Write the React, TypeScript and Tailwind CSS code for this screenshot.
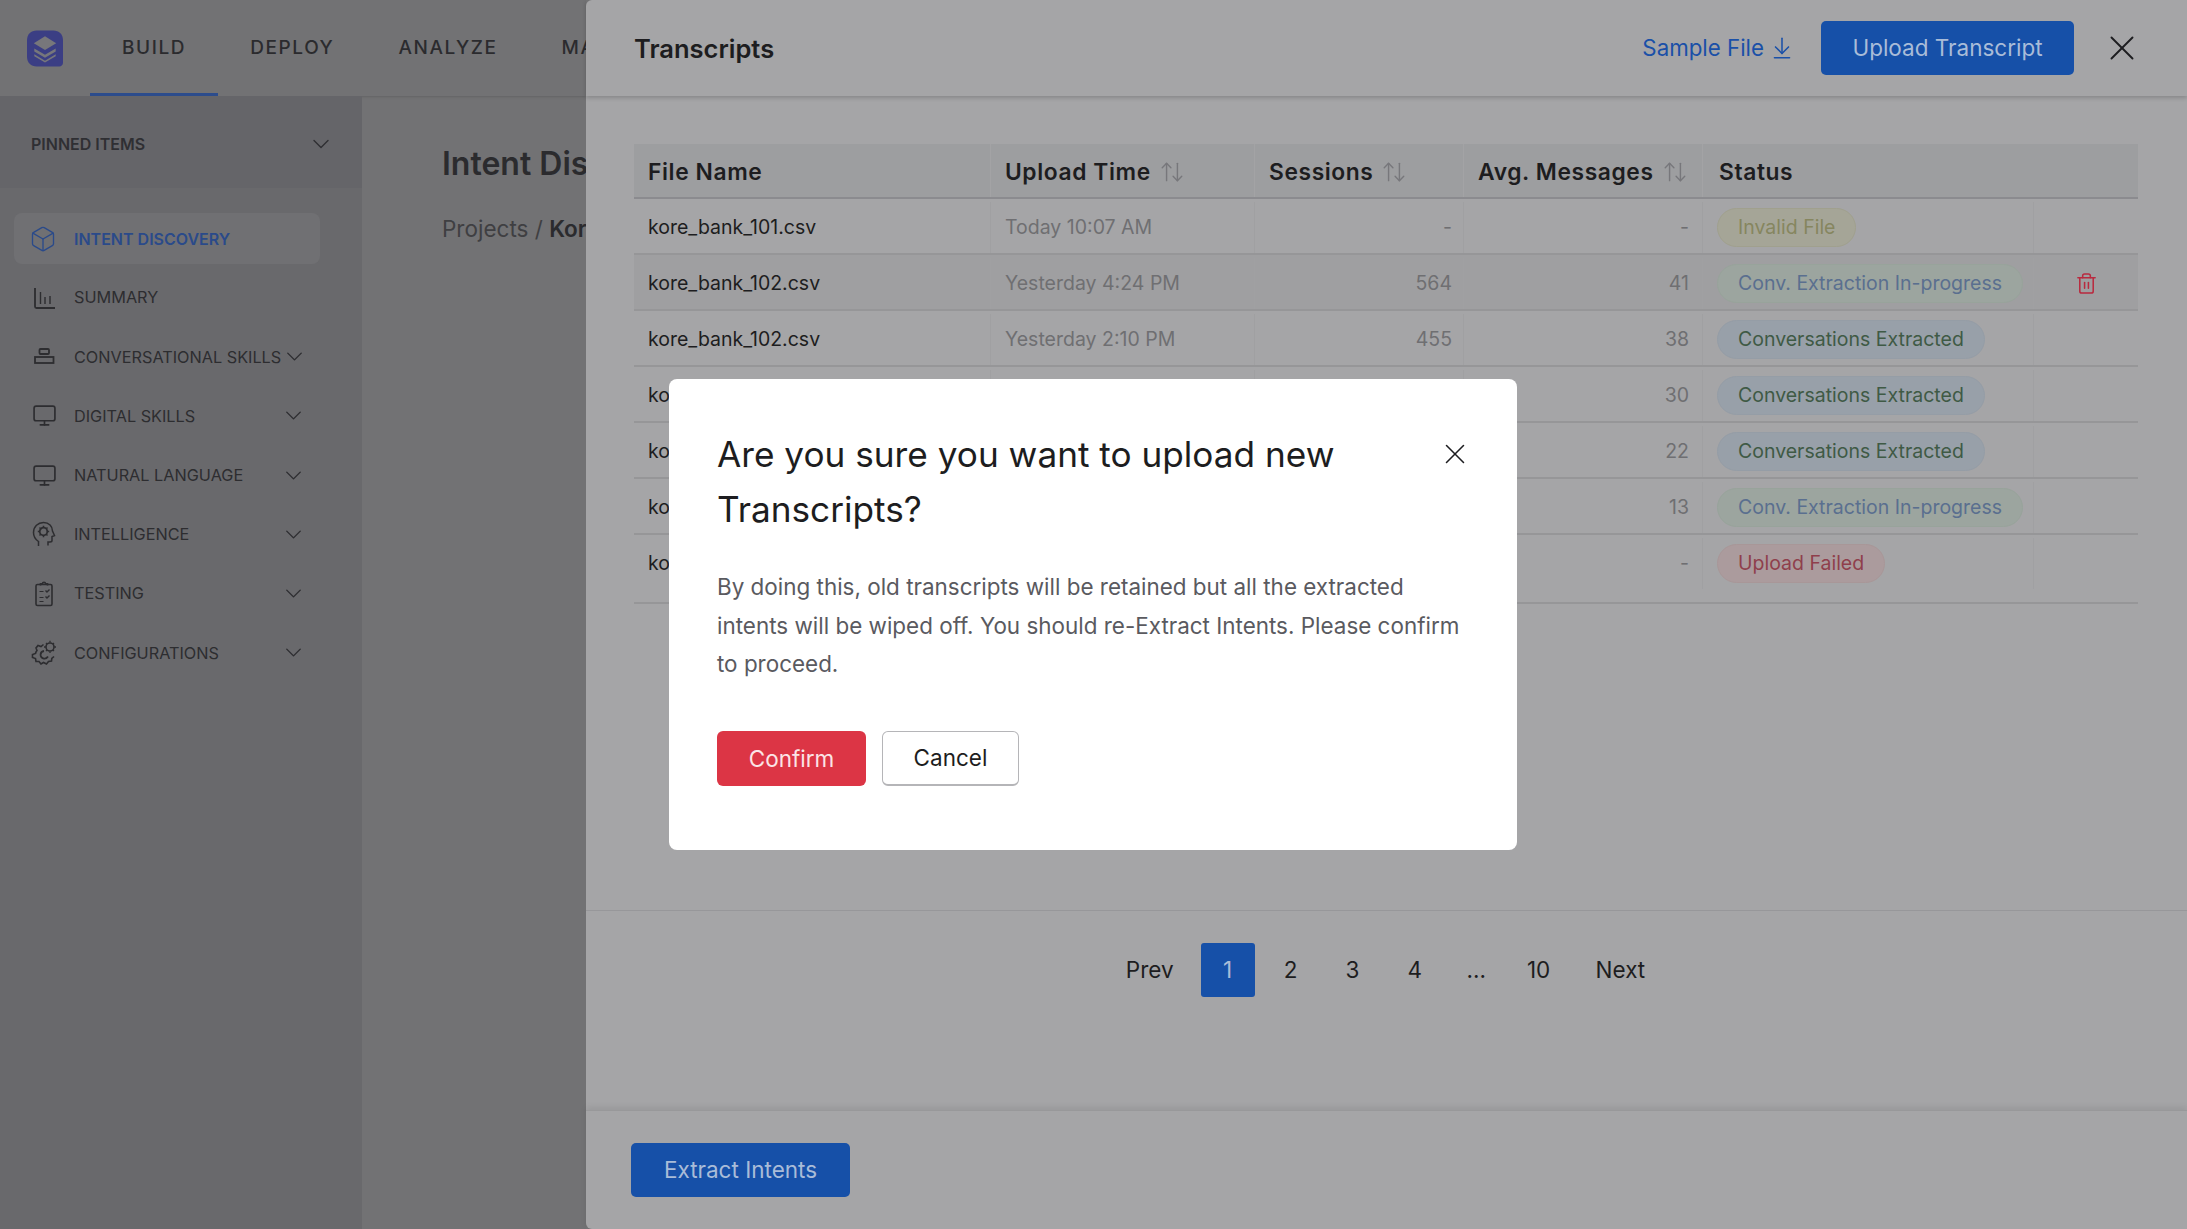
import React from 'react';
import { ArrowDownToLine, ArrowUpDown, Box, ChevronDown, Monitor, Trash2, X } from 'lucide-react';

const LogoMark = () => (
  <svg width="36" height="37" viewBox="0 0 37 37" className="shrink-0">
    <path d="M10 0H27C33 0 37 4 37 10V33C37 35.5 35.5 37 33 37H10C4 37 0 33 0 27V10C0 4 4 0 10 0Z" fill="#3b3e84" />
    <path d="M18.5 6L30 13L18.5 20L7 13Z" fill="#77777b" />
    <path d="M7.5 18.5L18.5 25L29.5 18.5V21.5L18.5 28L7.5 21.5Z" fill="#77777b" />
    <path d="M7.5 24.5L18.5 31L29.5 24.5V26.5L18.5 33L7.5 26.5Z" fill="#77777b" />
  </svg>
);

const SummaryIcon = () => (
  <svg width="24" height="24" viewBox="0 0 24 24" fill="none" stroke="currentColor" strokeWidth="1.4">
    <path d="M3 2V20.5C3 21.5 3.5 22 4.5 22H23" strokeWidth="1.8" />
    <path d="M8.5 6V18M13 11V18M18 10V18" />
  </svg>
);

const StackIcon = () => (
  <svg width="24" height="24" viewBox="0 0 24 24" fill="none" stroke="currentColor" strokeWidth="1.8">
    <rect x="7.5" y="4" width="9.5" height="5" rx="1" />
    <rect x="3" y="12" width="18.5" height="6" />
  </svg>
);

const HeadGearIcon = () => (
  <svg width="24" height="26" viewBox="0 0 24 26" fill="none" stroke="currentColor" strokeWidth="1.5">
    <path d="M6.5 25V20.5C3.5 18.5 1.5 15.5 1.5 11.5C1.5 5.5 6 1.5 11.5 1.5C17 1.5 20.5 5.5 20.5 10L22.5 14.5L20 15.5V19.5C20 20.5 19 21 18 21H16V24.5" />
    <circle cx="11.5" cy="10.5" r="3.8" strokeWidth="1.8" />
    <path d="M11.5 4.8V6.5M11.5 14.5V16.2M5.8 10.5H7.5M15.5 10.5H17.2M7.5 6.5L8.7 7.7M14.3 13.3L15.5 14.5M7.5 14.5L8.7 13.3M14.3 7.7L15.5 6.5" />
  </svg>
);

const ChecklistIcon = () => (
  <svg width="24" height="26" viewBox="0 0 24 26" fill="none" stroke="currentColor" strokeWidth="1.6">
    <rect x="4" y="3.5" width="16" height="21" rx="1.5" />
    <path d="M8.5 4.5V2.8H10.5C10.5 0.8 13.5 0.8 13.5 2.8H15.5V4.5" />
    <path d="M7.5 10.5H11.5M7.5 16.5H11.5M7.5 20.5H11.5" strokeWidth="1.2" />
    <path d="M13.5 9.5L15 11L17.5 8.5M13.5 15.5L15 17L17.5 14.5" strokeWidth="1.4" />
  </svg>
);

const GearsIcon = () => (
  <svg width="26" height="26" viewBox="0 0 26 26" fill="none" stroke="currentColor" strokeWidth="1.6">
    <path d="M12.5 4.5L10 6.5L7 5.5L5 8L6 10.5C5.2 11.4 4.7 12.5 4.5 13.5L1.5 14.5V17.5L4.5 18.5L5 21.5L8 21.5L10 24L12.5 22.5L15.5 24L17.5 21.5L20.5 21L20.8 18.5L23 16.5" />
    <circle cx="19" cy="7" r="4" />
    <path d="M19 0.8V2.5M19 11.5V13M13 7H14.8M23.2 7H25M15 3L16 4M22 10L23 11M15 11L16 10M22 4L23 3" strokeWidth="1.3" />
    <path d="M17 16.5C16 18 14.6 18.8 13 18.6C10.8 18.3 9.3 16.4 9.6 14.3C9.8 12.6 11.2 11.2 13 11" strokeWidth="1.8" />
  </svg>
);

const sideItems = [
  { label: 'SUMMARY', icon: <SummaryIcon /> },
  { label: 'CONVERSATIONAL SKILLS', icon: <StackIcon />, more: true },
  { label: 'DIGITAL SKILLS', icon: <Monitor size={25} strokeWidth={1.6} />, more: true },
  { label: 'NATURAL LANGUAGE', icon: <Monitor size={25} strokeWidth={1.6} />, more: true },
  { label: 'INTELLIGENCE', icon: <HeadGearIcon />, more: true },
  { label: 'TESTING', icon: <ChecklistIcon />, more: true },
  { label: 'CONFIGURATIONS', icon: <GearsIcon />, more: true },
];

const pillStyles: Record<string, string> = {
  invalid: 'bg-[#a5a597] border-[#a0a08e] text-[#86865f]',
  progress: 'bg-[#9ca59f] border-[#98a39b] text-[#5a6f8f]',
  done: 'bg-[#98a0a9] border-[#959da6] text-[#3f5a45]',
  failed: 'bg-[#ab9b9d] border-[#a89798] text-[#8f3f4c]',
};

// rows 4-7 sit behind the modal, only the start of the name shows
const rows = [
  { name: 'kore_bank_101.csv', time: 'Today 10:07 AM', sessions: '-', avg: '-', status: 'Invalid File', kind: 'invalid' },
  { name: 'kore_bank_102.csv', time: 'Yesterday 4:24 PM', sessions: '564', avg: '41', status: 'Conv. Extraction In-progress', kind: 'progress', trash: true },
  { name: 'kore_bank_102.csv', time: 'Yesterday 2:10 PM', sessions: '455', avg: '38', status: 'Conversations Extracted', kind: 'done' },
  { name: 'ko', time: '', sessions: '', avg: '30', status: 'Conversations Extracted', kind: 'done' },
  { name: 'ko', time: '', sessions: '', avg: '22', status: 'Conversations Extracted', kind: 'done' },
  { name: 'ko', time: '', sessions: '', avg: '13', status: 'Conv. Extraction In-progress', kind: 'progress' },
  { name: 'ko', time: '', sessions: '', avg: '-', status: 'Upload Failed', kind: 'failed' },
];

const HeadCell = ({ label, sort, className }: { label: string; sort?: boolean; className: string }) => (
  <div className={`flex items-center gap-2 border-r border-[#a3a3a5] pl-[14px] pt-[3px] text-[22.8px] font-semibold tracking-[0.6px] text-[#1d1d20] ${className}`}>
    {label}
    {sort && <ArrowUpDown size={26} strokeWidth={1.3} className="text-[#77777b]" />}
  </div>
);

export default function App() {
  return (
    <div className="relative h-[1229px] w-[2187px] overflow-hidden bg-[#727274] font-['Inter',sans-serif]">
      {/* Page behind the panel, clipped at the panel's edge */}
      <div className="flex h-full w-[586px] flex-col overflow-hidden">
        <header className="flex h-24 shrink-0 items-center pl-[27px] shadow-sm">
          <LogoMark />
          <nav className="ml-[27px] flex h-full">
            {['BUILD', 'DEPLOY', 'ANALYZE', 'MANAGE'].map((item, idx) => (
              <div key={item} className={`flex items-center border-b-[3px] px-[32px] pt-[3px] text-[19px] font-medium tracking-[1.6px] text-[#2b2b2e] ${idx === 0 ? 'border-[#2c4c8c]' : 'border-transparent'}`}>
                {item}
              </div>
            ))}
          </nav>
        </header>

        <div className="flex min-h-0 flex-1">
          <aside className="w-[362px] shrink-0 bg-[#69696c]">
            <div className="flex h-[92px] items-center justify-between bg-[#656569] pl-[31px] pr-[27px] pt-[3px]">
              <span className="text-[16px] font-semibold text-[#2f2f33]">PINNED ITEMS</span>
              <ChevronDown size={28} strokeWidth={1.2} className="text-[#2f2f33]" />
            </div>
            <div className="flex flex-col px-[14px] pt-[25px]">
              <div className="flex h-[51px] w-[306px] items-center gap-[17px] rounded-lg bg-[#707073] pl-[15px] text-[#2a4a8a]">
                <Box size={28} strokeWidth={1.15} />
                <span className="text-[16px] font-semibold">INTENT DISCOVERY</span>
              </div>
              {sideItems.map((item, idx) => (
                <div key={item.label} className={`flex h-[59.2px] w-[306px] items-center text-[#2d2d30] ${idx === 0 ? 'mt-[4px]' : ''}`}>
                  <span className="flex w-[60px] shrink-0 justify-center">{item.icon}</span>
                  <span className="text-[16.25px] whitespace-nowrap">{item.label}</span>
                  {item.more && <ChevronDown size={27} strokeWidth={1.25} className="ml-auto mr-[13px] shrink-0" />}
                </div>
              ))}
            </div>
          </aside>
          <main className="min-w-0 flex-1 overflow-hidden pl-[80px] pt-[44px] text-[#2b2b2e]">
            <h1 className="whitespace-nowrap text-[32px] font-semibold">Intent Discovery</h1>
            <p className="mt-[24px] whitespace-nowrap text-[22.5px] text-[#3f3f42]">
              Projects / <span className="font-semibold text-[#2b2b2e]">Kore Bank</span>
            </p>
          </main>
        </div>
      </div>

      {/* Transcripts slide-over */}
      <section className="absolute inset-y-0 right-0 flex w-[1601px] flex-col rounded-l-md bg-[#a5a5a7]">
        <div className="flex h-24 shrink-0 items-center pl-[48px] pr-[44px] shadow-[0_2px_4px_rgba(0,0,0,0.18)]">
          <h2 className="pt-[2px] text-[25.5px] font-semibold text-[#1d1d20]">Transcripts</h2>
          <a className="ml-auto flex items-center gap-[5px] text-[22.3px] text-[#1a50a8]">
            Sample File <ArrowDownToLine size={26} strokeWidth={1.4} />
          </a>
          <button className="ml-[26px] h-[54px] w-[253px] rounded-[5px] bg-[#1650a8] text-[22.5px] text-[#a9bcd8]">Upload Transcript</button>
          <X size={42} strokeWidth={1.1} className="ml-[27px] text-[#1d1d20]" />
        </div>

        <div className="pl-[49px] pr-[49px] pt-[48px]">
          <div className="ml-[-1px] flex h-[55px] items-stretch border-b-[2px] border-[#8b8b8f] bg-[#9d9ea0]">
            <HeadCell label="File Name" className="w-[357px]" />
            <HeadCell label="Upload Time" sort className="w-[264px]" />
            <HeadCell label="Sessions" sort className="w-[209px]" />
            <HeadCell label="Avg. Messages" sort className="w-[239px]" />
            <div className="flex items-center pl-[16px] pt-[3px] text-[22.8px] font-semibold tracking-[0.6px] text-[#1d1d20]">Status</div>
          </div>
          {rows.map((row, idx) => (
            <div key={idx} className={`ml-[-1px] border-b-[2px] border-[#969698] text-[19.5px] ${idx === 6 ? 'pb-[13px]' : ''} ${idx === 1 ? 'bg-[#9f9fa1]' : ''}`}>
              <div className="flex h-[54px] items-stretch pt-[3px]">
                <div className="flex w-[357px] items-center border-r border-[#a0a0a2] pl-[14px] text-[#1d1d20]">{row.name}</div>
                <div className="flex w-[264px] items-center border-r border-[#a0a0a2] pl-[14px] text-[#6f6f72]">{row.time}</div>
                <div className="flex w-[209px] items-center justify-end border-r border-[#a0a0a2] pr-[11px] text-[#6f6f72]">{row.sessions}</div>
                <div className="flex w-[239px] items-center justify-end border-r border-[#a0a0a2] pr-[13px] text-[#6f6f72]">{row.avg}</div>
                <div className="flex w-[331px] items-center border-r border-[#a0a0a2] pl-[14px]">
                  <span className={`flex h-[39px] items-center rounded-full border px-[20px] ${pillStyles[row.kind]}`}>{row.status}</span>
                </div>
                <div className="flex flex-1 items-center justify-center pl-[1px]">
                  {row.trash && <Trash2 size={23} strokeWidth={1.6} className="text-[#b92a3f]" />}
                </div>
              </div>
            </div>
          ))}
        </div>

        <div className="mt-[306px] flex h-[200px] shrink-0 justify-center border-t border-[#97979a] pt-[32px] text-[22.5px] text-[#1d1d20]">
          <div className="flex h-[54px] items-center pr-[2px]">
            <span className="mr-[27px]">Prev</span>
            <span className="mr-[29px] flex h-[54px] w-[54px] items-center justify-center rounded-[3px] bg-[#1650a8] text-[#a9bcd8]">1</span>
            <span className="mr-[48px] w-[14px] text-center">2</span>
            <span className="mr-[48px] w-[14px] text-center">3</span>
            <span className="mr-[45px] w-[14px] text-center">4</span>
            <span className="mr-[43px] w-[16px] text-center">...</span>
            <span className="mr-[44px] w-[26px] text-center">10</span>
            <span>Next</span>
          </div>
        </div>

        <div className="flex flex-1 items-start border-t border-[#98989a] pl-[45px] pt-[32px] shadow-[0_-3px_6px_rgba(0,0,0,0.08)]">
          <button className="h-[54px] w-[219px] rounded-[5px] bg-[#1650a8] text-[22.5px] text-[#a9bcd8]">Extract Intents</button>
        </div>
      </section>

      {/* Confirm modal */}
      <div className="fixed inset-0 flex items-center justify-center pr-[1px]">
        <div className="relative h-[471px] w-[848px] rounded-lg bg-white pl-[48px] pr-[47px] pt-[48px]">
          <X size={34} strokeWidth={1.1} className="absolute right-[45px] top-[58px] text-[#1d1d20]" />
          <h3 className="w-[680px] text-[35.2px] leading-[54.5px] text-[#1d1d20]">Are you sure you want to upload new Transcripts?</h3>
          <p className="mt-[32px] text-[22.45px] leading-[38.6px] text-[#5a5a5f]">
            By doing this, old transcripts will be retained but all the extracted intents will be wiped off. You should re-Extract Intents. Please confirm to proceed.
          </p>
          <div className="mt-[47px] flex gap-4">
            <button className="h-[55px] w-[149px] rounded-md bg-[#dc3545] pt-[1px] text-[22.5px] text-[#fbe4e6]">Confirm</button>
            <button className="h-[55px] w-[137px] rounded-md border border-[#b5b5b8] border-b-2 bg-white pt-[1px] text-[22.5px] text-[#1d1d20]">Cancel</button>
          </div>
        </div>
      </div>
    </div>
  );
}
